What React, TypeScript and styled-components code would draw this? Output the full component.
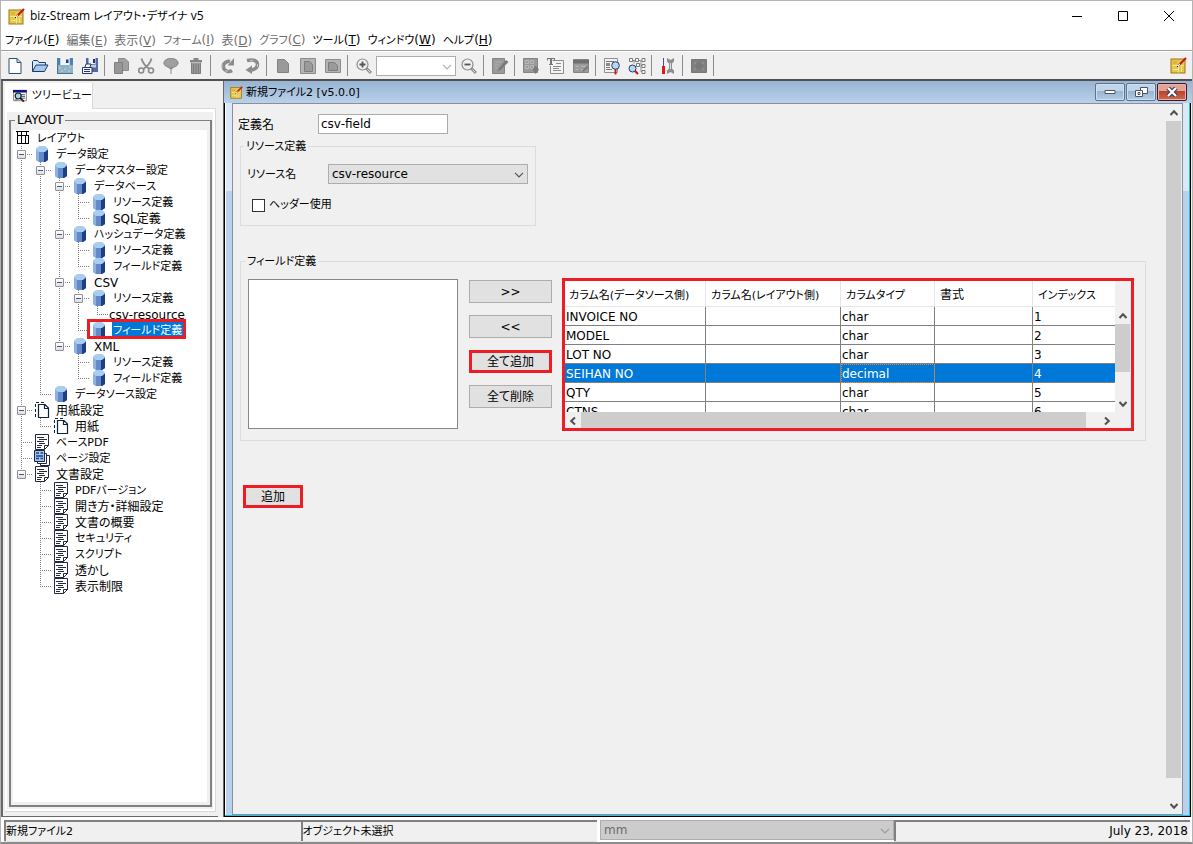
import React from "react";
import styled, { createGlobalStyle, css } from "styled-components";

const UI = `"DejaVu Sans", "Noto Sans CJK JP", sans-serif`;
const SHELL = `"Open Sans", "Noto Sans CJK JP", sans-serif`;
const RED = "#ee1c24";
const FACE = "#f0f0f0";
const BLUE = "#0078d7";

const Global = createGlobalStyle`
  *, *::before, *::after { box-sizing: border-box; }
  html, body { margin: 0; height: 100%; }
  #root { height: 100%; }
  body {
    font: 12px/16px ${UI};
    font-feature-settings: "palt";
    color: #000;
    background: ${FACE};
  }
  button, input, select { font: inherit; font-feature-settings: inherit; color: inherit; margin: 0; }
`;

const hasKatakana = (s: string) => /[ァ-ヶ]/.test(s);

const Label = styled.span<{ $small?: boolean }>`
  font-size: ${(p) => (p.$small ? "11px" : "12px")};
  white-space: nowrap;
`;

const Text = ({ children }: { children: string }) => (
  <Label $small={hasKatakana(children)}>{children}</Label>
);

/* ---------- window shell ---------- */

const Window = styled.div`
  display: flex;
  flex-direction: column;
  height: 100vh;
  min-height: 640px;
  border: 1px solid #b4b4b4;
  border-bottom: 2px solid #8c8c8c;
  background: ${FACE};
  overflow: hidden;
`;

const TitleBar = styled.header`
  display: flex;
  align-items: center;
  height: 30px;
  flex: none;
  padding-left: 7px;
  background: #fff;
  font-family: ${SHELL};
  gap: 5px;
`;

const TitleText = styled.h1`
  margin: 0;
  flex: 1;
  font-size: 12px;
  font-weight: 400;
  white-space: nowrap;
`;

const CaptionButton = styled.button`
  display: flex;
  align-items: center;
  justify-content: center;
  width: 46px;
  height: 28px;
  margin-left: -5px;
  padding: 0;
  border: 0;
  background: transparent;
`;

const MenuBar = styled.nav`
  display: flex;
  height: 20px;
  flex: none;
  padding-left: 1px;
  background: #fff;
  border-bottom: 1px solid #a0a0a0;
`;

const MenuButton = styled.button`
  padding: 0 4px 0 3px;
  border: 0;
  background: transparent;
  white-space: nowrap;
  &:disabled { color: #6d6d6d; }
`;

const Toolbar = styled.div`
  display: flex;
  align-items: center;
  height: 28px;
  flex: none;
  padding: 0 1px;
  border-top: 1px solid #fff;
`;

const ToolButton = styled.button`
  display: flex;
  align-items: center;
  justify-content: center;
  width: 25px;
  height: 24px;
  padding: 0;
  border: 0;
  background: transparent;
`;

const Separator = styled.span`
  width: 6px;
  height: 21px;
  background: linear-gradient(#8c8c8c, #8c8c8c) 2px 0 / 1px 100% no-repeat;
`;

const Spacer = styled.span`
  flex: 1;
`;

/* ---------- shared controls ---------- */

const SelectBox = styled.span<{ $width?: number; $tone?: "field" | "face" | "off" }>`
  position: relative;
  display: flex;
  height: 20px;
  ${(p) => (p.$width ? css`width: ${p.$width}px;` : css`flex: 1;`)}
  select {
    appearance: none;
    width: 100%;
    height: 100%;
    padding: 0 20px 0 3px;
    border: 1px solid #adadad;
    border-radius: 0;
    background: ${(p) => (p.$tone === "field" ? "#fff" : p.$tone === "off" ? "#ccc" : "#e1e1e1")};
    opacity: 1;
    color: ${(p) => (p.$tone === "off" ? "#6d6d6d" : "#000")};
  }
  svg {
    position: absolute;
    right: 4px;
    top: 8px;
    pointer-events: none;
  }
`;

const Chevron = ({ color = "#555" }: { color?: string }) => (
  <svg width="10" height="6" viewBox="0 0 10 6" fill="none" stroke={color} strokeWidth="1.2">
    <path d="M1 .8 5 4.8 9 .8" />
  </svg>
);

const PushButton = styled.button<{ $marked?: boolean }>`
  height: 23px;
  padding: 0;
  border: ${(p) => (p.$marked ? `3px solid ${RED}` : "1px solid #adadad")};
  background: #e1e1e1;
  line-height: 16px;
`;

const Track = styled.div<{ $row?: boolean }>`
  display: flex;
  flex-direction: ${(p) => (p.$row ? "row" : "column")};
  ${(p) => (p.$row ? css`height: 16px;` : css`width: 16px;`)}
  background: ${FACE};
  min-width: 0;
  min-height: 0;
`;

const ArrowButton = styled.button`
  display: flex;
  align-items: center;
  justify-content: center;
  width: 16px;
  height: 17px;
  flex: none;
  padding: 0;
  border: 0;
  background: transparent;
`;

const Thumb = styled.div<{ $grow: number }>`
  flex: ${(p) => p.$grow} 1 0;
  background: #cdcdcd;
  margin: 0 1px 0 0;
`;

const Gap = styled.div<{ $grow: number }>`
  flex: ${(p) => p.$grow} 1 0;
`;

const arrows = {
  up: "M1.5 7 5 3.2 8.5 7",
  down: "M1.5 3 5 6.8 8.5 3",
  left: "M7 1.5 3.2 5 7 8.5",
  right: "M3 1.5 6.8 5 3 8.5",
};

const Arrow = ({ dir }: { dir: keyof typeof arrows }) => (
  <svg width="10" height="10" viewBox="0 0 10 10" fill="none" stroke="#505050" strokeWidth="2">
    <path d={arrows[dir]} />
  </svg>
);

/* ---------- work area ---------- */

const Work = styled.main`
  display: flex;
  flex: 1;
  min-height: 0;
  border-top: 2px solid #505050;
`;

const SidePane = styled.aside`
  display: flex;
  flex-direction: column;
  width: 217px;
  flex: none;
  padding: 2px 2px 4px 2px;
  border-left: 2px solid #696969;
  border-bottom: 1px solid #696969;
`;

const TabStrip = styled.div`
  display: flex;
  height: 26px;
  flex: none;
`;

const Tab = styled.button`
  display: flex;
  align-items: center;
  gap: 5px;
  width: 88px;
  padding: 0 0 0 8px;
  border: 0;
  border-right: 1px solid #d9d9d9;
  background: #fff;
`;

const TabRest = styled.span`
  flex: 1;
  border-bottom: 1px solid #d9d9d9;
`;

const TabBody = styled.div`
  display: flex;
  flex: 1;
  min-height: 0;
  padding: 3px 2px 2px 2px;
  background: ${FACE};
  border: solid #d9d9d9;
  border-width: 0 1px 1px 0;
  box-shadow: inset 0 3px #fff, inset -2px -2px #fff, inset 2px 0 #fff;
`;

const TreeGroup = styled.fieldset`
  flex: 1;
  min-width: 0;
  margin: 0 1px 2px 2px;
  padding: 2px 3px 3px 2px;
  border: 2px solid #808080;
  border-top-width: 1px;
  legend {
    margin-left: 2px;
    padding: 0 2px;
    line-height: 16px;
  }
`;

const Tree = styled.ul`
  height: 100%;
  margin: 0;
  padding: 0;
  list-style: none;
  background: #fff;
`;

const TreeRow = styled.li`
  position: relative;
  display: flex;
  height: 16px;
  white-space: nowrap;
`;

const dotsV = "linear-gradient(#808080 50%, transparent 0)";
const dotsH = "linear-gradient(90deg, #808080 50%, transparent 0)";

const Guide = styled.span<{ $kind: "none" | "through" | "tee" | "last" }>`
  position: relative;
  display: flex;
  align-items: center;
  width: 19px;
  height: 16px;
  flex: none;
  ${(p) =>
    p.$kind === "through" &&
    css`background: ${dotsV} 8px 0 / 1px 2px repeat-y;`}
  ${(p) =>
    (p.$kind === "tee" || p.$kind === "last") &&
    css`
      &::before {
        content: "";
        position: absolute;
        left: 8px;
        top: 0;
        width: 1px;
        height: ${p.$kind === "tee" ? "16px" : "8px"};
        background: ${dotsV} 0 0 / 1px 2px;
      }
      &::after {
        content: "";
        position: absolute;
        left: 8px;
        right: 0;
        top: 8px;
        height: 1px;
        background: ${dotsH} 0 0 / 2px 1px;
      }
    `}
`;

const Expander = styled.button`
  position: relative;
  z-index: 1;
  width: 9px;
  height: 9px;
  margin-left: 4px;
  padding: 0;
  border: 1px solid #919191;
  border-radius: 1px;
  background: linear-gradient(#3a5a9c, #3a5a9c) center / 5px 1px no-repeat, linear-gradient(#fff, #ddd);
`;

const IconSlot = styled.span`
  display: flex;
  justify-content: center;
  width: 16px;
  height: 16px;
  margin: 0 5px 0 2px;
  flex: none;
`;

const NodeLabel = styled(Label)<{ $selected?: boolean }>`
  padding: 1px 1px 0;
  ${(p) => p.$selected && css`background: ${BLUE}; color: #fff;`}
`;

const Marker = styled.span`
  position: absolute;
  left: 74px;
  top: -3px;
  width: 99px;
  height: 20px;
  border: 3px solid ${RED};
`;

/* ---------- document frame ---------- */

const Desk = styled.section`
  display: flex;
  flex-direction: column;
  flex: 1;
  min-width: 0;
  margin-left: 5px;
  border-left: 1px solid #696969;
`;

const DocTitle = styled.div`
  display: flex;
  align-items: center;
  height: 22px;
  flex: none;
  padding: 0 5px 0 6px;
  background: linear-gradient(#98b4d2, #b9d1ea);
  gap: 1px;
  h2 {
    flex: 1;
    margin: 0 0 0 2px;
    font-size: 12px;
    font-weight: 400;
  }
`;

const DocButton = styled.button<{ $close?: boolean }>`
  display: flex;
  align-items: center;
  justify-content: center;
  width: 30px;
  height: 18px;
  padding: 0;
  border: 1px solid ${(p) => (p.$close ? "#4b1420" : "#5b7391")};
  border-radius: 2px;
  box-shadow: inset 0 0 0 1px ${(p) => (p.$close ? "#e9b3aa" : "#cfe0f2")};
  background: ${(p) =>
    p.$close
      ? "linear-gradient(#e3a296 45%, #b8432b 45%, #cf6a50)"
      : "linear-gradient(#c0d4ea 45%, #98b4d2 45%, #b4cce5)"};
`;

const DocBody = styled.div`
  display: flex;
  flex: 1;
  min-height: 0;
  margin-right: 1px;
  padding: 0 7px 1px 7px;
  border: 1px solid #000;
  border-top: 0;
  background: linear-gradient(#dce8f5, #dce8f5) 0 0 / 100% 88px no-repeat, #b9d1ea;
  box-shadow: inset -1px -1px #1cc6ea, inset 1px 0 #fff;
`;

const DocClient = styled.div`
  display: flex;
  flex: 1;
  min-width: 0;
  border: 1px solid #8a8f99;
  background: ${FACE};
`;

const Form = styled.form`
  flex: 1;
  min-width: 0;
  padding: 10px 20px 10px 5px;
`;

const FieldRow = styled.div`
  display: flex;
  align-items: center;
  height: 20px;
`;

const FieldLabel = styled.label`
  width: 80px;
  padding-top: 1px;
`;

const TextBox = styled.input`
  width: 130px;
  height: 20px;
  padding: 0 2px;
  border: 1px solid #ababab;
`;

const Group = styled.fieldset`
  min-width: 0;
  margin: 4px 0 0 2px;
  padding: 10px 14px 12px 7px;
  border: 1px solid #dcdcdc;
  legend {
    margin-left: -3px;
    padding: 0 2px;
    height: 16px;
  }
`;

const ResourceGroup = styled(Group)`
  width: 296px;
  padding-left: 6px;
  padding-right: 7px;
  ${FieldLabel} { width: 81px; }
`;

const FieldGroup = styled(Group)`
  display: flex;
  align-items: flex-start;
  margin-top: 27px;
  padding-bottom: 11px;
`;

const CheckRow = styled.label`
  display: flex;
  align-items: center;
  gap: 4px;
  height: 16px;
  margin: 13px 0 0 5px;
  input {
    appearance: none;
    width: 13px;
    height: 13px;
    border: 1px solid #333;
    background: #fff;
  }
`;

const ListBox = styled.div`
  width: 210px;
  height: 150px;
  flex: none;
  border: 1px solid #828790;
  background: #fff;
`;

const ButtonColumn = styled.div`
  display: flex;
  flex-direction: column;
  gap: 12px;
  width: 83px;
  flex: none;
  margin: 1px 13px 0 11px;
`;

const GridFrame = styled.div`
  display: grid;
  grid-template-columns: 1fr 16px;
  grid-template-rows: 131px 16px;
  flex: 1;
  min-width: 0;
  margin-top: 2px;
  outline: 3px solid ${RED};
`;

const GridClip = styled.div`
  overflow: hidden;
  background: #fff;
`;

const GridTable = styled.table`
  width: 100%;
  table-layout: fixed;
  border-collapse: separate;
  border-spacing: 0;
  th {
    height: 26px;
    padding: 3px 0 0 4px;
    border-right: 1px solid #e5e5e5;
    border-bottom: 1px solid #e5e5e5;
    font-weight: 400;
    text-align: left;
    white-space: nowrap;
  }
  th + th { padding-left: 5px; }
  td {
    height: 19px;
    padding: 1px 0 0 1px;
    border-right: 1px solid #808080;
    border-bottom: 1px solid #808080;
    line-height: 16px;
    white-space: nowrap;
  }
  th:last-child, td:last-child { border-right: 0; }
`;

const DataRow = styled.tr<{ $selected?: boolean }>`
  ${(p) =>
    p.$selected &&
    css`
      background: ${BLUE};
      color: #fff;
      td:nth-child(3) { outline: 1px dotted #e08a3c; outline-offset: -1px; }
    `}
`;

const VTrack = styled(Track)`
  padding-top: 26px;
`;

const AddRow = styled.div`
  display: flex;
  margin: 44px 0 0 5px;
  button { width: 60px; }
`;

/* ---------- status bar ---------- */

const StatusBar = styled.footer`
  display: flex;
  height: 25px;
  flex: none;
  padding: 3px 2px 1px 3px;
  background: #fff;
`;

const StatusCell = styled.div<{ $right?: boolean }>`
  flex: 1 1 25%;
  min-width: 0;
  padding: 1px 2px 0 0;
  border: solid #808080;
  border-width: 2px 0 0 2px;
  box-shadow: 0 1px #e4e4e4;
  background: ${FACE};
  text-align: ${(p) => (p.$right ? "right" : "left")};
`;

const UnitCell = styled.div`
  display: flex;
  flex: 1 1 25%;
  padding: 0 0 0 3px;
`;

/* ---------- icons ---------- */

const G = "#8c8c8c";

const LogoIcon = ({ size = 17 }: { size?: number }) => (
  <svg width={size} height={size} viewBox="0 0 17 17">
    <rect x="1" y="2" width="14" height="14" fill="#e2c94d" stroke="#a8710f" />
    <path d="M2 8.5h12M8.5 8v7.5M11.5 10v5M3 12.5h5" stroke="#f0e596" fill="none" />
    <path d="M3 4h4v3H3z" fill="#d9b53a" />
    <path d="M16 1 8.5 8.5" stroke="#c4171c" strokeWidth="2" />
    <path d="m9.500 6.500-3 3.500 3.600-2z" fill="#fff" />
    <rect x="7" y="9" width="1" height="1" fill="#111" />
  </svg>
);

const Svg = ({ children }: { children: React.ReactNode }) => (
  <svg width="18" height="18" viewBox="0 0 18 18" fill="none">{children}</svg>
);

const lens = (
  <>
    <circle cx="7.5" cy="7.5" r="5.5" stroke={G} strokeWidth="1.2" />
    <path d="m11.5 11.5 4.5 4.5" stroke={G} strokeWidth="3" />
    <path d="m12.5 12.5 3 3" stroke="#ddd" strokeWidth="1" />
  </>
);

const tools: Record<string, React.ReactNode> = {
  new: <path d="M3 1.5h8l4 4v11H3zM11 1.5v4h4" fill="#fff" stroke="#2b5275" />,
  open: (
    <>
      <path d="M1.5 14.5v-10l1-1h4l1.5 2h6.5v2.5" fill="#d6e7f6" stroke="#17406b" />
      <path d="M1.5 14.5 5 8h12l-3.5 6.500z" fill="#a6c8ec" stroke="#17406b" />
    </>
  ),
  save: (
    <>
      <path d="M1 1h16v16H1z" fill="#8fb3c4" />
      <path d="M1 1h3v7H1zM14 1h3v7h-3z" fill="#4b82b3" />
      <path d="M4.5 1h9v7h-9z" fill="#eef4fa" />
      <path d="M10 2.5h2.5v3.5H10z" fill="#1f3f8f" />
      <path d="M1 16.5h16M1.500 8v8" stroke="#4b7390" />
      <path d="M3 10h2v2H3zM8 11h2v2H8zM12 13h2v2h-2zM5 13h2v2H5zM13 9h2v2h-2z" fill="#a7c7cf" />
    </>
  ),
  saveAs: (
    <>
      <path d="M5 1h12v14H5z" fill="#5069a8" />
      <path d="M7.5 1h7v6h-7z" fill="#eef1fa" />
      <path d="M12 2h2v4h-2z" fill="#1f2f7a" />
      <path d="M5.5 10.5 7 8l8-.5v3z" fill="#c7c9cf" />
      <path d="M1.5 10.5h9.5v6H1.5z" fill="#f7f7ff" stroke="#26366f" />
      <path d="M3 12.5h6M3 14.5h6" stroke="#26366f" />
      <path d="m4 10 1-3h5l-1 3" fill="#fff" stroke="#26366f" />
    </>
  ),
  copy: (
    <>
      <path d="M6.5 1.5H13l3.500 3.500v8.500h-10z" fill="#a0a0a0" stroke={G} />
      <path d="M2.5 5.5h8v11h-8z" fill="#979797" stroke="#808080" />
    </>
  ),
  cut: (
    <>
      <path d="M4.5 1.5c1 4 3 7 8 10.5M14.5 1.5c-1 4-3 7-8 10.5" stroke={G} strokeWidth="1.8" />
      <circle cx="4.2" cy="13.5" r="2.5" stroke={G} strokeWidth="1.6" />
      <circle cx="14" cy="13.5" r="2.5" stroke={G} strokeWidth="1.6" />
    </>
  ),
  paste: (
    <>
      <ellipse cx="9" cy="6" rx="7.5" ry="5" fill="#a0a0a0" />
      <ellipse cx="9" cy="6" rx="7" ry="4.5" stroke={G} />
      <path d="M6 10.500h6l-2.500 2v4.500h-1v-4.500z" fill={G} />
    </>
  ),
  remove: (
    <>
      <path d="M3 3h12v2.500H3zM6.500 1h5v2h-5z" fill="#858585" />
      <path d="M4 6h10l-1 11H5z" fill="#9a9a9a" />
      <path d="M4.500 6v10.500h9V6M6.500 7v9M9 7v9M11.500 7v9" stroke="#7d7d7d" />
    </>
  ),
  undo: (
    <>
      <path d="M14 13.500a5.500 5 0 1 1-2-9" stroke={G} strokeWidth="3.500" />
      <path d="M9.500 8.500h6.500V1z" fill={G} />
      <path d="M4 7v4M7 14h3" stroke="#c4c4c4" />
    </>
  ),
  redo: (
    <>
      <path d="M4 3.500c6-1.500 10.500 0 10.500 4 0 3.500-3 5-6.500 5.500" stroke={G} strokeWidth="3.500" />
      <path d="M9 8.500v8.500L2.500 13z" fill={G} />
      <path d="M7 3.500h3M14.500 7v3" stroke="#c4c4c4" />
    </>
  ),
  page: <path d="M3.5 2.5h7l4 4v9h-11z" fill="#9a9a9a" stroke="#828282" />,
  pageFrame: (
    <>
      <path d="M1.5 1.5h15v15h-15z" fill="#b4b4b4" stroke={G} />
      <path d="M5.5 4.5h5l3 3v7h-8z" fill="#9a9a9a" stroke="#7c7c7c" />
    </>
  ),
  pageWide: (
    <>
      <path d="M1.5 2.5h15v13h-15z" fill="#b4b4b4" stroke={G} />
      <path d="M4.5 5.5h6l3 3v5h-9z" fill="#9a9a9a" stroke="#7c7c7c" />
    </>
  ),
  zoomIn: (
    <>
      {lens}
      <path d="M4.5 7.5h6M7.5 4.5v6" stroke="#555" strokeWidth="1.8" />
    </>
  ),
  zoomOut: (
    <>
      {lens}
      <path d="M4.5 7.5h6" stroke="#555" strokeWidth="1.8" />
    </>
  ),
  edit: (
    <>
      <path d="M1.5 1.5h12v15h-12z" fill="#9a9a9a" stroke="#858585" />
      <path d="M4 5h7M4 8h4M4 11h3" stroke="#adadad" />
      <path d="m8 11 7-8 2.500 2-8 8-3 1z" fill="#7a7a7a" />
    </>
  ),
  grid: (
    <>
      <path d="M1.5 1.5h14v14h-14z" fill="#9a9a9a" stroke="#858585" />
      <path d="M3.5 3.5h3v3h-3zM8.5 3.5h3v3h-3zM3.5 8.5h3v3h-3zM8.5 8.5h3v3h-3z" stroke="#b9b9b9" />
      <path d="M13.5 8.5 17 12.500l-3.500 4.500-3-4.500z" fill="#7c7c7c" />
    </>
  ),
  text: (
    <>
      <path d="M5.5 3.5h11v13h-13V9" fill="#f4f4f4" stroke={G} />
      <path d="M0 1h8v2.5H7V2H5v5h1v1H2V7h1V2H1v1.5H0z" fill="#777" />
      <path d="M9 6.5h5M6 9.5h8M6 11.5h6M6 13.5h8" stroke={G} />
    </>
  ),
  form: (
    <>
      <path d="M1.5 2.5h15v13h-15z" fill="#9a9a9a" stroke="#848484" />
      <path d="M1 3h16v3.500H1z" fill="#6f6f6f" />
      <path d="M3.500 9.500h3M3.500 12.500h3M9 9.500h5M9 12.500h2" stroke="#b9b9b9" />
      <path d="m10 14 5-5 1.500 1.500-5 4z" fill="#777" />
    </>
  ),
  preview: (
    <>
      <path d="M1.5 1.5h13v14h-13z" fill="#f2f2f2" stroke="#909090" />
      <path d="M3 4.5h8M3 12.500h6M3 10.500h4" stroke="#777" />
      <path d="M3 6h4v3H3z" fill="#8a8a8a" />
      <path d="M12.500 12v5.500" stroke="#d0191c" strokeWidth="2" />
      <circle cx="12.500" cy="8.500" r="3.800" fill="#b7d8f5" stroke="#233b66" />
    </>
  ),
  tree: (
    <>
      <path d="M3 3.500h6M9 3.500h4v11h2M13 8.500h2M6 3.500v3" stroke="#8a8a8a" />
      <path d="M1.500 1.500h3v3h-3zM7.500 1.500h3v3h-3zM14 1.500h3v3h-3zM14 7.500h3v3h-3zM14 13.500h3v3h-3zM8.500 6.500h3v3h-3z" fill="#fff" stroke="#777" />
      <path d="m7 14 3 3" stroke="#d0191c" strokeWidth="2.200" />
      <circle cx="4.500" cy="11.500" r="3.500" fill="#b7d8f5" stroke="#233b66" />
    </>
  ),
  wrench: (
    <>
      <path d="M4.500 1v9" stroke="#4a4f8c" />
      <path d="M4.500 9v8" stroke="#e2191c" strokeWidth="3" />
      <path d="M8 1v3.500l2 2v5l-2 2V17l3.500-2 3.500 2v-3.500l-2-2v-5l2-2V1l-3.500 2z" fill="#8a8f96" />
      <path d="M11.500 6v6" stroke="#d9dde2" />
    </>
  ),
  image: (
    <>
      <path d="M1.500 2.500h15v13h-15z" fill="#808080" stroke="#777" />
      <path d="M4 5h2v2H4zM12 5h2v2h-2zM4 11h2v2H4zM12 11h2v2h-2z" fill="#8f8f8f" />
      <circle cx="9" cy="9" r="3.500" fill="#797979" />
    </>
  ),
};

const nodeIcons: Record<string, React.ReactNode> = {
  root: (
    <svg width="16" height="16" viewBox="0 0 16 16" fill="none" stroke="#000">
      <path d="M1 1.500h13M2.500 1v13M2 13.500h12M13.500 5v9M2 5.500h12M6.500 1v13M10.500 5v9M11.500 1v4" />
    </svg>
  ),
  db: (
    <svg width="16" height="16" viewBox="0 0 16 16">
      <path d="M2 3h12v11l-3 2H5l-3-2z" fill="#6489c8" />
      <path d="M2 3h3v13l-3-2z" fill="#8db2e0" />
      <path d="M10 3h4v11l-3 2h-1z" fill="#1e3f88" />
      <path d="M2 2.500 5 0h6l3 2.500v1L11 6H5L2 3.500z" fill="#a9cdf0" />
    </svg>
  ),
  doc: (
    <svg width="16" height="16" viewBox="0 0 16 16" fill="none" stroke="#26293c">
      <path d="M1.500 .5h13v11l-4 4h-9z" fill="#fff" />
      <path d="M14.500 11.500h-4v4" />
      <path d="M3 3.500h7M5 5.500h8M3 7.500h7M5 9.500h6M3 11.500h5M3 13.500h4" />
    </svg>
  ),
  paper: (
    <svg width="16" height="16" viewBox="0 0 16 16" fill="none" stroke="#0d2238">
      <path d="M1.500 15V.5H12" strokeDasharray="3 2" />
      <path d="M4.500 2.500H11l3.500 3.500v9.500h-10zM10.500 2.500v4h4" fill="#fff" strokeWidth="1.200" />
    </svg>
  ),
  pages: (
    <svg width="16" height="16" viewBox="0 0 16 16" fill="none" stroke="#1c2547">
      <path d="M6.500 5.500h9v10h-9z" fill="#fff" />
      <path d="M3.500 3.500h9v10h-9z" fill="#fff" />
      <path d="M.5.500h10v11H.5z" fill="#9fc6ee" />
      <path d="M2 3h3M6.500 3h2.500M2 6h7M2 8.500h3M6.500 8.500h2.500" stroke="#223c86" strokeWidth="1.500" />
    </svg>
  ),
};

const TabIcon = () => (
  <svg width="16" height="16" viewBox="0 0 16 16" fill="none">
    <path d="M.5 1.500h15v12H.5z" fill="#fff" stroke="#777" />
    <path d="M0 1h16v3H0z" fill="#11118a" />
    <path d="M9 6.500h5M10 8.500h4M10 10.500h4M2 12.500h3" stroke="#444" />
    <circle cx="6" cy="8" r="3.500" fill="#9fd8e0" stroke="#111" strokeWidth="1.300" />
    <path d="m8.500 10.500 4 4" stroke="#111" strokeWidth="2" />
    <path d="m10 12 2 2" stroke="#d0191c" />
  </svg>
);

/* ---------- data ---------- */

const menus: [string, string, boolean][] = [
  ["ファイル", "F", true],
  ["編集", "E", false],
  ["表示", "V", false],
  ["フォーム", "I", false],
  ["表", "D", false],
  ["グラフ", "C", false],
  ["ツール", "T", true],
  ["ウィンドウ", "W", true],
  ["ヘルプ", "H", true],
];

const toolsBefore = ["new", "open", "save", "saveAs", "|", "copy", "cut", "paste", "remove", "|", "undo", "redo", "|", "page", "pageFrame", "pageWide", "|", "zoomIn"];
const toolsAfter = ["zoomOut", "|", "edit", "|", "grid", "text", "form", "|", "preview", "tree", "|", "wrench", "|", "image", "|"];

type TreeNode = { name: string; icon?: string; children?: TreeNode[]; selected?: boolean };

const db = (name: string, children?: TreeNode[], selected?: boolean): TreeNode => ({ name, icon: "db", children, selected });
const doc = (name: string, children?: TreeNode[]): TreeNode => ({ name, icon: "doc", children });

const layoutTree: TreeNode[] = [
  db("データ設定", [
    db("データマスター設定", [
      db("データベース", [db("リソース定義"), db("SQL定義")]),
      db("ハッシュデータ定義", [db("リソース定義"), db("フィールド定義")]),
      db("CSV", [db("リソース定義", [{ name: "csv-resource" }]), db("フィールド定義", undefined, true)]),
      db("XML", [db("リソース定義"), db("フィールド定義")]),
    ]),
    db("データソース設定"),
  ]),
  { name: "用紙設定", icon: "paper", children: [{ name: "用紙", icon: "paper" }] },
  doc("ベースPDF"),
  { name: "ページ設定", icon: "pages" },
  doc("文書設定", [
    doc("PDFバージョン"),
    doc("開き方・詳細設定"),
    doc("文書の概要"),
    doc("セキュリティ"),
    doc("スクリプト"),
    doc("透かし"),
    doc("表示制限"),
  ]),
];

const columns: [string, number?][] = [
  ["カラム名(データソース側)", 141],
  ["カラム名(レイアウト側)", 135],
  ["カラムタイプ", 94],
  ["書式", 98],
  ["インデックス"],
];

const rows = [
  ["INVOICE NO", "char"],
  ["MODEL", "char"],
  ["LOT NO", "char"],
  ["SEIHAN NO", "decimal"],
  ["QTY", "char"],
  ["CTNS", "char"],
];

/* ---------- composition ---------- */

function renderNodes(nodes: TreeNode[], trail: boolean[] = []): React.ReactNode[] {
  return nodes.flatMap((node, i) => {
    const last = i === nodes.length - 1;
    const key = [...trail, i, node.name].join("/");
    return [
      <TreeRow key={key}>
        {trail.map((open, d) => (
          <Guide key={d} $kind={open ? "through" : "none"} />
        ))}
        <Guide $kind={last ? "last" : "tee"}>
          {node.children && <Expander type="button" aria-label={`${node.name} を閉じる`} />}
        </Guide>
        {node.icon && <IconSlot>{nodeIcons[node.icon]}</IconSlot>}
        <NodeLabel $small={hasKatakana(node.name)} $selected={node.selected}>{node.name}</NodeLabel>
        {node.selected && <Marker />}
      </TreeRow>,
      ...(node.children ? renderNodes(node.children, [...trail, !last]) : []),
    ];
  });
}

const ToolItems = ({ items }: { items: string[] }) => (
  <>
    {items.map((id, i) =>
      id === "|" ? (
        <Separator key={i} />
      ) : (
        <ToolButton key={i} type="button" aria-label={id}>
          <Svg>{tools[id]}</Svg>
        </ToolButton>
      )
    )}
  </>
);

export default function App() {
  return (
    <>
      <Global />
      <Window>
        <TitleBar>
          <LogoIcon />
          <TitleText>biz-Stream <Text>レイアウト・デザイナ</Text> v5</TitleText>
          <CaptionButton aria-label="最小化">
            <svg width="12" height="12" stroke="#000"><path d="M1 6.500h10" /></svg>
          </CaptionButton>
          <CaptionButton aria-label="最大化">
            <svg width="12" height="12" stroke="#000" fill="none"><path d="M1.500 1.500h9v9h-9z" /></svg>
          </CaptionButton>
          <CaptionButton aria-label="閉じる">
            <svg width="12" height="12" stroke="#000"><path d="m1 1 10 10M11 1 1 11" /></svg>
          </CaptionButton>
        </TitleBar>
        <MenuBar>
          {menus.map(([name, key, on]) => (
            <MenuButton key={key} disabled={!on}>
              <Text>{name}</Text>(<u>{key}</u>)
            </MenuButton>
          ))}
        </MenuBar>
        <Toolbar>
          <ToolItems items={toolsBefore} />
          <SelectBox $width={80} $tone="field">
            <select aria-label="表示倍率" disabled><option></option></select>
            <Chevron color="#b0b0b0" />
          </SelectBox>
          <ToolItems items={toolsAfter} />
          <Spacer />
          <ToolButton type="button" aria-label="biz-Stream"><LogoIcon /></ToolButton>
        </Toolbar>

        <Work>
          <SidePane>
            <TabStrip>
              <Tab type="button"><TabIcon /><Text>ツリービュー</Text></Tab>
              <TabRest />
            </TabStrip>
            <TabBody>
              <TreeGroup>
                <legend>LAYOUT</legend>
                <Tree>
                  <TreeRow>
                    <IconSlot>{nodeIcons.root}</IconSlot>
                    <NodeLabel $small>レイアウト</NodeLabel>
                  </TreeRow>
                  {renderNodes(layoutTree)}
                </Tree>
              </TreeGroup>
            </TabBody>
          </SidePane>

          <Desk>
            <DocTitle>
              <LogoIcon size={13} />
              <h2><Text>新規ファイル2 [v5.0.0]</Text></h2>
              <DocButton aria-label="アイコン化">
                <svg width="12" height="6" fill="#fff" stroke="#4a5666"><path d="M1 1.500h10v3H1z" /></svg>
              </DocButton>
              <DocButton aria-label="元に戻す">
                <svg width="13" height="12" fill="#fff" stroke="#4a5666">
                  <path d="M5.500 1.500h7v6h-7z" />
                  <path d="M.5 4.500h7v6h-7z" />
                  <path d="M3 6.500h2v2H3z" />
                </svg>
              </DocButton>
              <DocButton $close aria-label="ファイルを閉じる">
                <svg width="12" height="10" fill="none">
                  <path d="m2 1 8 8M10 1 2 9" stroke="#3c4356" strokeWidth="4.500" />
                  <path d="m2 1 8 8M10 1 2 9" stroke="#fff" strokeWidth="2.200" />
                </svg>
              </DocButton>
            </DocTitle>
            <DocBody>
              <DocClient>
                <Form>
                  <FieldRow>
                    <FieldLabel htmlFor="def-name">定義名</FieldLabel>
                    <TextBox id="def-name" defaultValue="csv-field" />
                  </FieldRow>
                  <ResourceGroup>
                    <legend><Text>リソース定義</Text></legend>
                    <FieldRow>
                      <FieldLabel htmlFor="res-name"><Text>リソース名</Text></FieldLabel>
                      <SelectBox>
                        <select id="res-name"><option>csv-resource</option></select>
                        <Chevron />
                      </SelectBox>
                    </FieldRow>
                    <CheckRow>
                      <input type="checkbox" />
                      <Text>ヘッダー使用</Text>
                    </CheckRow>
                  </ResourceGroup>
                  <FieldGroup>
                    <legend><Text>フィールド定義</Text></legend>
                    <ListBox role="listbox" aria-label="フィールド" />
                    <ButtonColumn>
                      <PushButton type="button">&gt;&gt;</PushButton>
                      <PushButton type="button">&lt;&lt;</PushButton>
                      <PushButton type="button" $marked>全て追加</PushButton>
                      <PushButton type="button">全て削除</PushButton>
                    </ButtonColumn>
                    <GridFrame>
                      <GridClip>
                        <GridTable>
                          <colgroup>
                            {columns.map(([name, w]) => <col key={name} width={w} />)}
                          </colgroup>
                          <thead>
                            <tr>
                              {columns.map(([name]) => (
                                <th key={name} scope="col"><Text>{name}</Text></th>
                              ))}
                            </tr>
                          </thead>
                          <tbody>
                            {rows.map(([name, type], i) => (
                              <DataRow key={name} $selected={i === 3}>
                                <td>{name}</td>
                                <td></td>
                                <td>{type}</td>
                                <td></td>
                                <td>{i + 1}</td>
                              </DataRow>
                            ))}
                          </tbody>
                        </GridTable>
                      </GridClip>
                      <VTrack>
                        <ArrowButton type="button" aria-label="上へ"><Arrow dir="up" /></ArrowButton>
                        <Thumb $grow={47} />
                        <Gap $grow={23} />
                        <ArrowButton type="button" aria-label="下へ"><Arrow dir="down" /></ArrowButton>
                      </VTrack>
                      <Track $row>
                        <ArrowButton type="button" aria-label="左へ"><Arrow dir="left" /></ArrowButton>
                        <Thumb $grow={506} />
                        <Gap $grow={12} />
                        <ArrowButton type="button" aria-label="右へ"><Arrow dir="right" /></ArrowButton>
                      </Track>
                      <Track $row />
                    </GridFrame>
                  </FieldGroup>
                  <AddRow>
                    <PushButton type="button" $marked>追加</PushButton>
                  </AddRow>
                </Form>
                <Track>
                  <ArrowButton type="button" aria-label="上へスクロール"><Arrow dir="up" /></ArrowButton>
                  <Thumb $grow={657} />
                  <Gap $grow={19} />
                  <ArrowButton type="button" aria-label="下へスクロール"><Arrow dir="down" /></ArrowButton>
                </Track>
              </DocClient>
            </DocBody>
          </Desk>
        </Work>

        <StatusBar>
          <StatusCell><Text>新規ファイル2</Text></StatusCell>
          <StatusCell><Text>オブジェクト未選択</Text></StatusCell>
          <UnitCell>
            <SelectBox $tone="off">
              <select aria-label="単位" disabled><option>mm</option></select>
              <Chevron color="#9a9a9a" />
            </SelectBox>
          </UnitCell>
          <StatusCell $right>July 23, 2018</StatusCell>
        </StatusBar>
      </Window>
    </>
  );
}
